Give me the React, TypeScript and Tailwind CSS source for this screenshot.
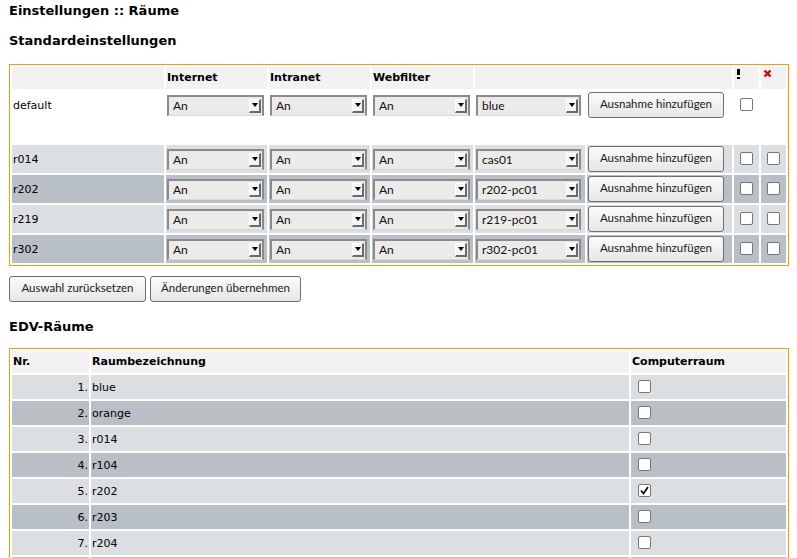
import React from "react";

const rooms = [
  { name: "r014", filter: "cas01" },
  { name: "r202", filter: "r202-pc01" },
  { name: "r219", filter: "r219-pc01" },
  { name: "r302", filter: "r302-pc01" },
];

const edv = [
  { name: "blue", pc: false },
  { name: "orange", pc: false },
  { name: "r014", pc: false },
  { name: "r104", pc: false },
  { name: "r202", pc: true },
  { name: "r203", pc: false },
  { name: "r204", pc: false },
  { name: "r205", pc: false },
];

function Select({ value, wide }: { value: string; wide?: boolean }) {
  return (
    <div
      className={`flex h-[21px] items-center border-t-2 border-l-2 border-r-2 border-b border-[#8a8a8a] border-b-[#d8d8d8] bg-[#ecebe9] font-['Lato',sans-serif] text-[12px] text-[#111] ${
        wide ? "w-[105px]" : "w-[97px]"
      }`}
    >
      <span className="flex-1 pl-[4px] leading-none">{value}</span>
      <span className="mr-[1px] flex h-[14px] w-[12px] items-center justify-center border-t border-l border-t-white border-l-white border-r-2 border-b-2 border-r-[#6a6a6a] border-b-[#6a6a6a] bg-[#f4f4f4]">
        <span className="h-0 w-0 border-x-[3px] border-t-[4px] border-x-transparent border-t-black" />
      </span>
    </div>
  );
}

function Check({ checked }: { checked?: boolean }) {
  return (
    <span className="relative inline-block h-[13px] w-[13px] rounded-[2px] border border-[#767676] bg-white align-middle">
      {checked && (
        <svg viewBox="0 0 13 13" className="absolute -left-px -top-px h-[13px] w-[13px]">
          <path d="M3 6.5 L5.5 9.5 L10 3" fill="none" stroke="#111" strokeWidth="1.8" />
        </svg>
      )}
    </span>
  );
}

function Btn({ children, className }: { children: React.ReactNode; className: string }) {
  return (
    <button
      className={`h-[26px] rounded-[3px] border border-[#6f6f6f] bg-linear-to-b from-[#fbfbfb] to-[#e6e6e6] pb-[2px] font-['Lato',sans-serif] text-[11.5px] text-[#1a1a1a] ${className}`}
    >
      {children}
    </button>
  );
}

export default function App() {
  return (
    <div className="min-h-[558px] bg-white px-[9px] pt-[3px] font-['DejaVu_Sans',sans-serif] text-[11px] text-black">
      <h1 className="text-[13px] font-bold leading-4">Einstellungen :: Räume</h1>
      <h2 className="mt-[14px] text-[13px] font-bold leading-4">Standardeinstellungen</h2>

      {/* standard settings */}
      <table className="mt-[15px] w-[780px] table-fixed border-separate border-spacing-[2px] border border-[#ff9900]">
        <colgroup>
          <col className="w-[152px]" />
          <col className="w-[101px]" />
          <col className="w-[101px]" />
          <col className="w-[101px]" />
          <col className="w-[110px]" />
          <col className="w-[145px]" />
          <col className="w-[25px]" />
          <col className="w-[25px]" />
        </colgroup>
        <thead>
          <tr className="h-[22px] bg-[#f2f2f2] text-left font-bold">
            <th className="p-[1px] align-middle"></th>
            <th className="p-[1px] align-middle">Internet</th>
            <th className="p-[1px] align-middle">Intranet</th>
            <th className="p-[1px] align-middle">Webfilter</th>
            <th className="p-[1px]" colSpan={2}></th>
            <th className="p-[1px] pl-[2px] align-top">
              <svg viewBox="0 0 5 10" className="mt-[1px] h-[10px] w-[5px]">
                <rect x="1" y="0" width="3" height="6" fill="#000" />
                <rect x="1" y="8" width="3" height="2" fill="#000" />
              </svg>
            </th>
            <th className="p-[1px] pl-[2px] align-top">
              <svg viewBox="0 0 9 9" className="mt-[1px] h-[9px] w-[9px]">
                <path d="M1.5 1.5 L7.5 7.5 M7.5 1.5 L1.5 7.5" stroke="#e00000" strokeWidth="2.4" />
              </svg>
            </th>
          </tr>
        </thead>
        <tbody>
          <tr className="h-[28px]">
            <td className="p-[1px] pt-[4px] align-middle">default</td>
            <td className="p-[1px] align-middle"><Select value="An" /></td>
            <td className="p-[1px] align-middle"><Select value="An" /></td>
            <td className="p-[1px] align-middle"><Select value="An" /></td>
            <td className="p-[1px] align-middle"><Select value="blue" wide /></td>
            <td className="p-[1px] align-middle"><Btn className="w-[136px]">Ausnahme hinzufügen</Btn></td>
            <td className="p-[1px] text-center align-middle"><Check /></td>
            <td className="p-[1px]"></td>
          </tr>
          <tr className="h-[22px]">
            <td colSpan={8}></td>
          </tr>
          {rooms.map((r, i) => (
            <tr key={r.name} className={`h-[28px] ${i % 2 == 0 ? "bg-[#dcdfe2]" : "bg-[#b8bfc6]"}`}>
              <td className="p-[1px] pt-[4px] align-middle">{r.name}</td>
              <td className="p-[1px] align-middle"><Select value="An" /></td>
              <td className="p-[1px] align-middle"><Select value="An" /></td>
              <td className="p-[1px] align-middle"><Select value="An" /></td>
              <td className="p-[1px] align-middle"><Select value={r.filter} wide /></td>
              <td className="p-[1px] align-middle"><Btn className="w-[136px]">Ausnahme hinzufügen</Btn></td>
              <td className="p-[1px] text-center align-middle"><Check /></td>
              <td className="p-[1px] text-center align-middle"><Check /></td>
            </tr>
          ))}
        </tbody>
      </table>

      <div className="mt-[10px] flex gap-[4px]">
        <Btn className="w-[137px]">Auswahl zurücksetzen</Btn>
        <Btn className="w-[151px]">Änderungen übernehmen</Btn>
      </div>

      <h2 className="mt-[17px] text-[13px] font-bold leading-4">EDV-Räume</h2>

      {/* computer rooms */}
      <table className="mt-[13px] w-[780px] table-fixed border-separate border-spacing-[2px] border border-[#ff9900]">
        <colgroup>
          <col className="w-[77px]" />
          <col className="w-[538px]" />
          <col className="w-[155px]" />
        </colgroup>
        <thead>
          <tr className="h-[22px] bg-[#f2f2f2] text-left font-bold">
            <th className="p-[1px] align-middle">Nr.</th>
            <th className="p-[1px] align-middle">Raumbezeichnung</th>
            <th className="p-[1px] align-middle">Computerraum</th>
          </tr>
        </thead>
        <tbody>
          {edv.map((r, i) => (
            <tr key={r.name} className={`h-[24px] ${i % 2 == 0 ? "bg-[#dcdfe2]" : "bg-[#b8bfc6]"}`}>
              <td className="p-[1px] pt-[3px] text-right align-middle">{i + 1}.</td>
              <td className="p-[1px] pt-[3px] align-middle">{r.name}</td>
              <td className="p-[1px] pl-[7px] align-middle"><Check checked={r.pc} /></td>
            </tr>
          ))}
        </tbody>
      </table>
    </div>
  );
}
